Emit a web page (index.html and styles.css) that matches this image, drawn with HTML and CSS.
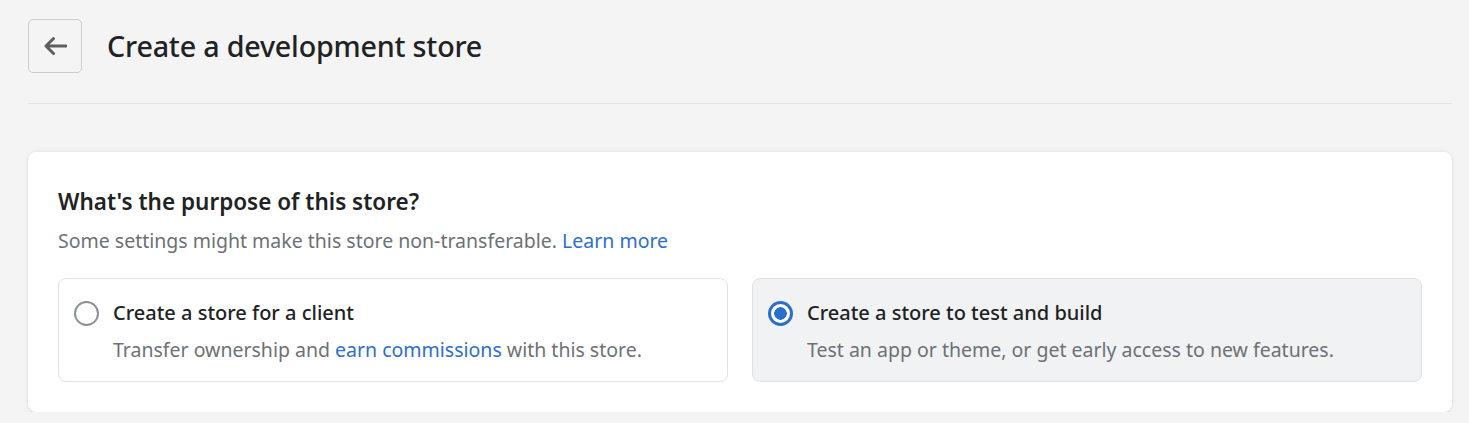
FILE: index.html
```html
<!DOCTYPE html>
<html>
<head>
<meta charset="utf-8">
<link rel="stylesheet" href="styles.css">
</head>
<body>
<div class="page">
  <header class="header">
    <button class="back" aria-label="Back">
      <svg width="24" height="20" viewBox="0 0 24 20"><path d="M23 10H3M10.5 2.5L3 10l7.5 7.5" fill="none" stroke="#5c5f62" stroke-width="3" stroke-linecap="round" stroke-linejoin="round"/></svg>
    </button>
    <h1 class="title">Create a development store</h1>
  </header>
  <div class="divider"></div>
  <section class="card">
    <h2 class="card-title">What's the purpose of this store?</h2>
    <p class="card-sub">Some settings might make this store non-transferable. <a href="#" class="link">Learn more</a></p>
    <div class="options">
      <label class="option">
        <span class="radio"></span>
        <span class="option-body">
          <span class="option-title">Create a store for a client</span>
          <span class="option-desc">Transfer ownership and <a href="#" class="link">earn commissions</a> with this store.</span>
        </span>
      </label>
      <label class="option option-selected">
        <span class="radio radio-on"></span>
        <span class="option-body">
          <span class="option-title">Create a store to test and build</span>
          <span class="option-desc">Test an app or theme, or get early access to new features.</span>
        </span>
      </label>
    </div>
  </section>
</div>
</body>
</html>
```
FILE: styles.css
```css
* { box-sizing: border-box; }
html, body { margin: 0; background: #f4f4f4; }
body { font-family: "Noto Sans", "Open Sans", sans-serif; color: #202223; }
.page { padding: 19px 17px 0 28px; }
.header { display: flex; align-items: center; gap: 25px; }
.back {
  width: 54px; height: 54px; border: 1px solid #c9cccf; border-radius: 5px;
  background: transparent; display: flex; align-items: center; justify-content: center; padding: 0;
}
.title { margin: 0; font-size: 28.7px; font-weight: 500; letter-spacing: -0.2px; line-height: 36px; }
.divider { height: 1px; background: #e1e3e5; margin-top: 30px; }
.card {
  margin-top: 48px; background: #fff; border-radius: 8px;
  box-shadow: 0 0 4px rgba(0,0,0,0.08), 0 1px 2px rgba(0,0,0,0.08);
  padding: 36px 30px 30px;
}
.card-title { margin: 0; font-size: 22.5px; font-weight: 600; line-height: 28px; }
.card-sub { margin: 11px 0 0; font-size: 19.5px; color: #6d7175; line-height: 28px; }
.link { color: #2c6ecb; text-decoration: none; }
.options { display: grid; grid-template-columns: 1fr 1fr; gap: 24px; margin-top: 23px; }
.option {
  display: flex; gap: 14px; border: 1px solid #dfe1e4; border-radius: 8px;
  padding: 21px 15px 17px 15px; height: 104px;
}
.option-selected { background: #f1f2f4; }
.radio {
  width: 25px; height: 25px; border-radius: 50%; border: 2.5px solid #8c9196; flex: none; margin-top: 0.5px;
}
.radio-on { border: 3px solid #2c6ecb; background: radial-gradient(circle, #2c6ecb 0 6px, #fff 6.5px); }
.option-body { display: flex; flex-direction: column; gap: 11px; }
.option-title { font-size: 20px; font-weight: 500; line-height: 26px; }
.option-desc { font-size: 19.5px; color: #6d7175; line-height: 26px; }
```
